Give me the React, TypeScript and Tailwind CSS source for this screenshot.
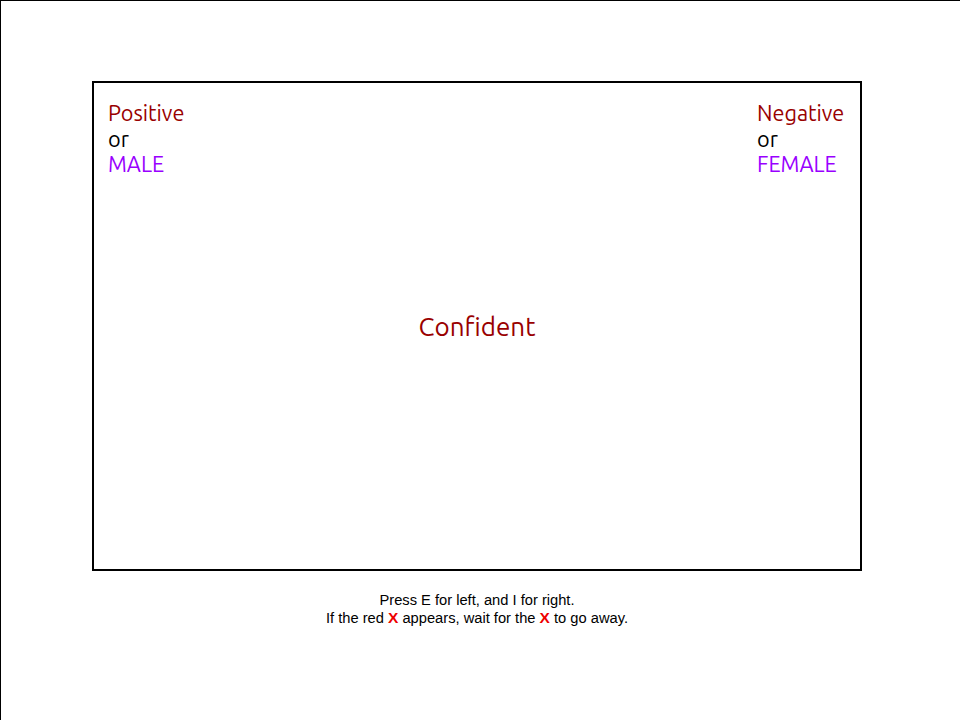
export default function App() {
  return (
    <div className="h-[720px] w-[960px] overflow-hidden border-l border-t border-black bg-white">
      <div className="ml-[91px] mt-[80px] grid h-[490px] w-[770px] border-2 border-black font-['Ubuntu','Open_Sans',sans-serif]">
        <div className="col-start-1 row-start-1 flex items-start justify-between pl-[14px] pr-[5px] pt-[18px] text-[21.7px] leading-[25.5px]">
          <div className="flex flex-col">
            <span className="text-[#990000]">Positive</span>
            <span className="text-black">or</span>
            <span className="text-[#9900ff]">MALE</span>
          </div>
          <div className="flex w-[98px] flex-col">
            <span className="text-[#990000]">Negative</span>
            <span className="text-black">or</span>
            <span className="text-[#9900ff]">FEMALE</span>
          </div>
        </div>
        <div className="col-start-1 row-start-1 flex items-center justify-center text-[26px] text-[#990000]">
          Confident
        </div>
      </div>
      <div className="ml-[91px] mt-[21px] w-[770px] text-center font-['Liberation_Sans',Arial,sans-serif] text-[14.7px] leading-[17px] text-black">
        <p>Press E for left, and I for right.</p>
        <p>
          If the red <span className="text-[15.5px] font-bold text-[#ee0000]">X</span> appears, wait for the{" "}
          <span className="text-[15.5px] font-bold text-[#ee0000]">X</span> to go away.
        </p>
      </div>
    </div>
  );
}
